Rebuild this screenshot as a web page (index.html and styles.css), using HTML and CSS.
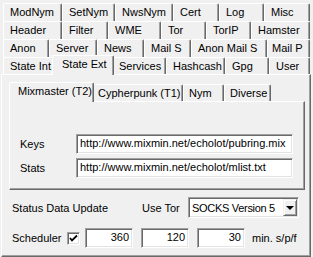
FILE: index.html
```html
<!DOCTYPE html>
<html lang="en">
<head>
    <meta charset="UTF-8">
    <title>Options</title>
    <link rel="stylesheet" href="styles.css">
</head>
<body>

    <div class="pages">
        <div class="tabrow">
            <div class="tab w59">ModNym</div>
            <div class="tab w53">SetNym</div>
            <div class="tab w58">NwsNym</div>
            <div class="tab w46">Cert</div>
            <div class="tab w45">Log</div>
            <div class="tab last">Misc</div>
        </div>
        <div class="tabrow">
            <div class="tab w59">Header</div>
            <div class="tab w46">Filter</div>
            <div class="tab w53">WME</div>
            <div class="tab w45">Tor</div>
            <div class="tab w45">TorIP</div>
            <div class="tab last">Hamster</div>
        </div>
        <div class="tabrow">
            <div class="tab w46">Anon</div>
            <div class="tab w48">Server</div>
            <div class="tab w47">News</div>
            <div class="tab w47">Mail S</div>
            <div class="tab w76">Anon Mail S</div>
            <div class="tab last tight">Mail P</div>
        </div>
        <div class="tabrow">
            <div class="tab w51">State Int</div>
            <div class="tab active">State Ext</div>
            <div class="tab w54">Services</div>
            <div class="tab w59">Hashcash</div>
            <div class="tab w44">Gpg</div>
            <div class="tab last">User</div>
        </div>

        <div class="page">
            <!-- Unter-Registerkarten -->
            <div class="subpages">
                <div class="tabrow sub">
                    <div class="tab active">Mixmaster (T2)</div>
                    <div class="tab w91">Cypherpunk (T1)</div>
                    <div class="tab w41">Nym</div>
                    <div class="tab w47">Diverse</div>
                </div>
                <div class="subpage">
                    <div class="field">
                        <span class="label">Keys</span>
                        <div class="edit url">http://www.mixmin.net/echolot/pubring.mix</div>
                    </div>
                    <div class="field">
                        <span class="label">Stats</span>
                        <div class="edit url">http://www.mixmin.net/echolot/mlist.txt</div>
                    </div>
                </div>
            </div>

            <div class="line status">
                <span class="caption">Status Data Update</span>
                <span class="usetor">Use Tor</span>
                <div class="combo">
                    <span class="combo-text">SOCKS Version 5</span>
                    <span class="combo-btn"><span class="arrow"></span></span>
                </div>
            </div>

            <div class="line sched">
                <span class="caption short">Scheduler</span>
                <span class="check">
                    <svg width="9" height="9" viewBox="0 0 9 9"><path d="M1 4 L3 6.5 L8 1.5" fill="none" stroke="#000" stroke-width="1.8"/></svg>
                </span>
                <div class="edit num">360</div>
                <div class="edit num">120</div>
                <div class="edit num">30</div>
                <span class="unit">min. s/p/f</span>
            </div>
        </div>
    </div>

</body>
</html>
```

FILE: styles.css
```css
body {
    margin: 0;
    width: 313px;
    height: 257px;
    overflow: hidden;
    background-color: #f0f0f0;
    font-family: 'Liberation Sans', Arial, sans-serif;
    font-size: 11px;
    color: #000;
}

/* Registerkarten */
.pages {
    width: 310px;
    padding-top: 3px;
    margin-left: 1px;
}
.tabrow {
    display: flex;
    align-items: flex-start;
    height: 18px;
    padding: 0 1px 0 2px;
}
.tab {
    box-sizing: border-box;
    height: 18px;
    padding: 1px 0 0 6px;
    line-height: 14px;
    white-space: nowrap;
    background-color: #f0f0f0;
    border-top: 1px solid #fff;
    border-left: 1px solid #fff;
    border-right: 1px solid #696969;
    border-radius: 2px 2px 0 0;
    box-shadow: inset -1px 0 0 #a0a0a0;
}
.tab.last { flex: 1; }
.tab.tight { padding-left: 4px; }
.w41 { width: 41px; }
.w44 { width: 44px; }
.w45 { width: 45px; }
.w46 { width: 46px; }
.w47 { width: 47px; }
.w48 { width: 48px; }
.w51 { width: 51px; }
.w53 { width: 53px; }
.w54 { width: 54px; }
.w58 { width: 58px; }
.w59 { width: 59px; }
.w76 { width: 76px; }
.w91 { width: 91px; }

.tab.active {
    position: relative;
    z-index: 2;
    width: 62px;
    height: 20px;
    margin: -2px -2px 0;
    padding-left: 9px;
}

.page {
    position: relative;
    z-index: 1;
    box-sizing: border-box;
    height: 183px;
    margin-top: -1px;
    border-top: 1px solid #fff;
    border-left: 1px solid #fff;
    border-right: 1px solid #696969;
    border-bottom: 1px solid #696969;
    box-shadow: inset -1px -1px 0 #a0a0a0;
}

/* innere Registerkarten */
.subpages {
    margin: 9px 5px 0 7px;
}
.tabrow.sub {
    height: 17px;
    padding: 0;
    padding-left: 2px;
}
.sub .tab {
    height: 17px;
    padding-left: 5px;
}
.sub .tab.active {
    width: 85px;
    height: 20px;
    padding-left: 8px;
}
.subpage {
    position: relative;
    z-index: 1;
    box-sizing: border-box;
    height: 89px;
    padding: 32px 0 0 10px;
    border-top: 1px solid #fff;
    border-left: 1px solid #fff;
    border-right: 1px solid #696969;
    border-bottom: 1px solid #696969;
    box-shadow: inset -1px -1px 0 #a0a0a0;
}
.field {
    display: flex;
    align-items: center;
    height: 20px;
    margin-bottom: 4px;
}
.label {
    width: 56px;
}

/* Eingabefelder */
.edit {
    box-sizing: border-box;
    height: 20px;
    line-height: 16px;
    background-color: #fff;
    border-top: 1px solid #a0a0a0;
    border-left: 1px solid #a0a0a0;
    border-right: 1px solid #fff;
    border-bottom: 1px solid #fff;
    box-shadow: inset 1px 1px 0 #696969, inset -1px -1px 0 #e3e3e3;
    white-space: nowrap;
    overflow: hidden;
}
.edit.url {
    width: 217px;
    padding-left: 3px;
}
.edit.num {
    width: 48px;
    margin-right: 8px;
    padding-right: 3px;
    text-align: right;
}

.line {
    display: flex;
    align-items: center;
    padding-left: 10px;
}
.status {
    height: 21px;
    margin-top: 7px;
}
.sched {
    height: 20px;
    margin-top: 10px;
}
.caption {
    width: 130px;
}
.caption.short {
    width: 55px;
}
.usetor {
    width: 46px;
}

/* Auswahlliste */
.combo {
    box-sizing: border-box;
    display: flex;
    align-items: center;
    width: 111px;
    height: 21px;
    background-color: #fff;
    border-top: 1px solid #a0a0a0;
    border-left: 1px solid #a0a0a0;
    border-right: 1px solid #fff;
    border-bottom: 1px solid #fff;
    box-shadow: inset 1px 1px 0 #696969, inset -1px -1px 0 #e3e3e3;
    padding: 1px;
}
.combo-text {
    flex: 1;
    min-width: 0;
    padding-left: 2px;
    letter-spacing: -0.3px;
    white-space: nowrap;
    overflow: hidden;
}
.combo-btn {
    box-sizing: border-box;
    display: flex;
    justify-content: center;
    align-items: center;
    flex: none;
    width: 14px;
    height: 17px;
    background-color: #f0f0f0;
    border-top: 1px solid #f0f0f0;
    border-left: 1px solid #f0f0f0;
    border-right: 1px solid #696969;
    border-bottom: 1px solid #696969;
    box-shadow: inset 1px 1px 0 #fff, inset -1px -1px 0 #a0a0a0;
}
.arrow {
    width: 0;
    height: 0;
    border-left: 4px solid transparent;
    border-right: 4px solid transparent;
    border-top: 4px solid #000;
}

/* Haekchen */
.check {
    box-sizing: border-box;
    display: flex;
    justify-content: center;
    align-items: center;
    width: 13px;
    height: 13px;
    margin-right: 5px;
    background-color: #fff;
    border-top: 1px solid #a0a0a0;
    border-left: 1px solid #a0a0a0;
    border-right: 1px solid #fff;
    border-bottom: 1px solid #fff;
    box-shadow: inset 1px 1px 0 #696969, inset -1px -1px 0 #e3e3e3;
}
.unit {
    margin-left: -1px;
}
```
